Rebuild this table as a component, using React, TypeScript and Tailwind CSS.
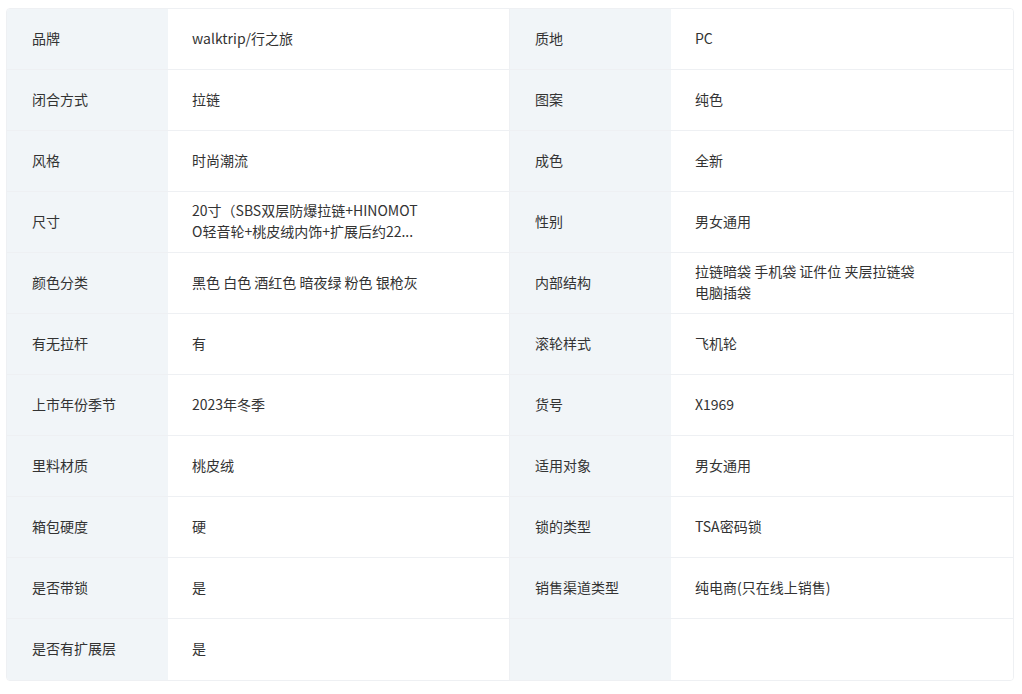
import React from "react";

const left = [
  ["品牌", "walktrip/行之旅"],
  ["闭合方式", "拉链"],
  ["风格", "时尚潮流"],
  ["尺寸", "20寸（SBS双层防爆拉链+HINOMOTO轻音轮+桃皮绒内饰+扩展后约22..."],
  ["颜色分类", "黑色 白色 酒红色 暗夜绿 粉色 银枪灰"],
  ["有无拉杆", "有"],
  ["上市年份季节", "2023年冬季"],
  ["里料材质", "桃皮绒"],
  ["箱包硬度", "硬"],
  ["是否带锁", "是"],
  ["是否有扩展层", "是"],
];

const right = [
  ["质地", "PC"],
  ["图案", "纯色"],
  ["成色", "全新"],
  ["性别", "男女通用"],
  ["内部结构", "拉链暗袋 手机袋 证件位 夹层拉链袋 电脑插袋"],
  ["滚轮样式", "飞机轮"],
  ["货号", "X1969"],
  ["适用对象", "男女通用"],
  ["锁的类型", "TSA密码锁"],
  ["销售渠道类型", "纯电商(只在线上销售)"],
  ["", ""],
];

const Cell = ({ label, value, last }: { label: string; value: string; last: boolean }) => (
  <div className={`flex h-[61px] ${last ? "" : "border-b border-[#eef0f3]"}`}>
    <div className="w-[161px] shrink-0 bg-[#f1f5f8] pl-[25px] pb-[2px] flex items-center">{label}</div>
    <div className="flex-1 bg-white pl-[24px] pb-[2px] flex items-center">
      <div className="max-w-[234px] leading-[21px] break-all">{value}</div>
    </div>
  </div>
);

export default function App() {
  return (
    <div className="bg-white min-h-screen pt-[8px] px-[6px] pb-[14px]">
      <div
        className="grid grid-cols-[503px_1fr] w-[1008px] border border-[#eef0f3] rounded-[4px] overflow-hidden text-[14px] text-[#333]"
        style={{ fontFamily: '"Noto Sans CJK SC", "Noto Sans", sans-serif' }}
      >
        <div className="border-r border-[#eef0f3]">
          {left.map(([l, v], i) => (
            <Cell key={i} label={l} value={v} last={i === left.length - 1} />
          ))}
        </div>
        <div>
          {right.map(([l, v], i) => (
            <Cell key={i} label={l} value={v} last={i === right.length - 1} />
          ))}
        </div>
      </div>
    </div>
  );
}
